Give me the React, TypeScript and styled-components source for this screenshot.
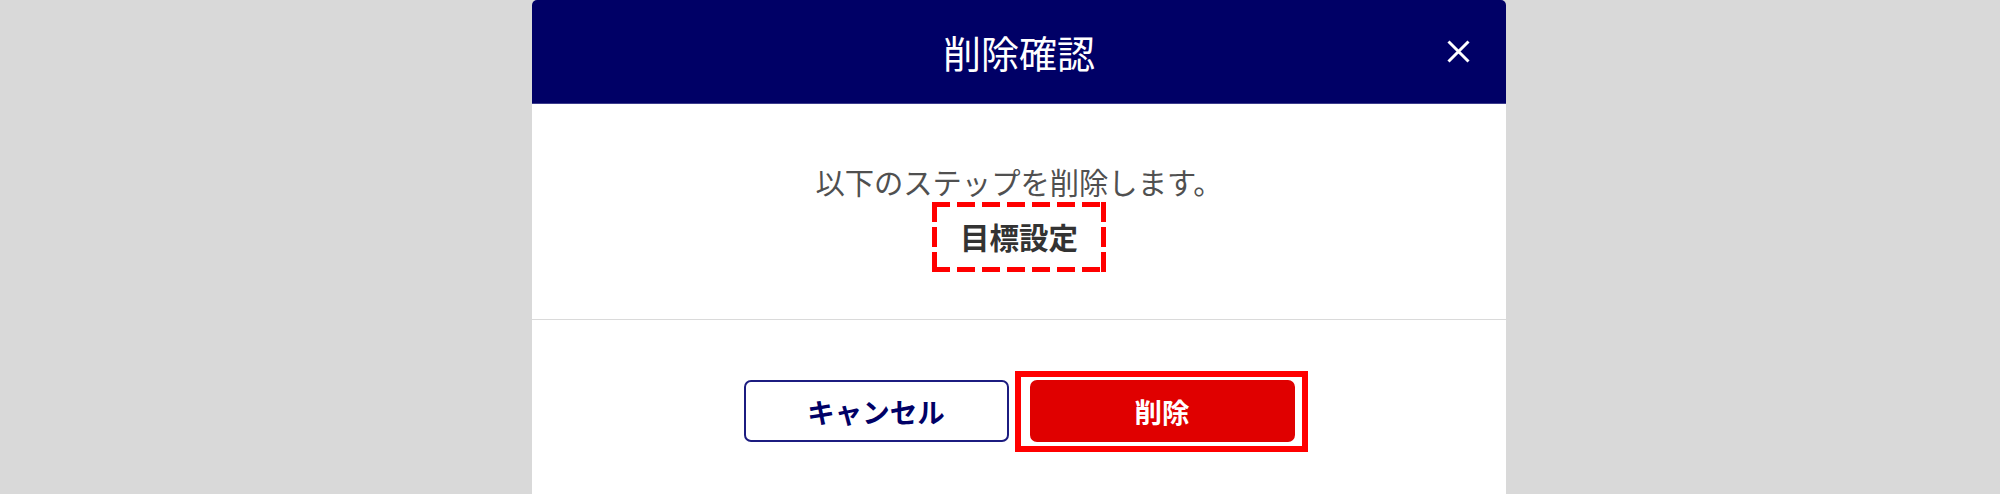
import React from "react";
import styled, { createGlobalStyle } from "styled-components";

const Global = createGlobalStyle`
  html, body {
    margin: 0;
    padding: 0;
    background: #d9d9d9;
    font-family: "Noto Sans CJK JP", "Noto Sans", sans-serif;
  }
`;

const Overlay = styled.div`
  display: flex;
  justify-content: center;
  padding-left: 38px;
  min-height: 494px;
  background: #d9d9d9;
`;

const Dialog = styled.div`
  width: 974px;
  background: #ffffff;
  border-radius: 5px 5px 0 0;
  overflow: hidden;
  align-self: flex-start;
`;

const Header = styled.div`
  display: grid;
  grid-template-columns: 1fr auto 1fr;
  align-items: center;
  height: 103px;
  background: #000066;
  border-bottom: 1px solid #3c3c8c;
`;

const Title = styled.h2`
  grid-column: 2;
  margin: 0;
  color: #ffffff;
  font-size: 38px;
  font-weight: 400;
  line-height: 1;
`;

const CloseButton = styled.button`
  grid-column: 3;
  justify-self: end;
  margin-right: 36px;
  width: 24px;
  height: 24px;
  padding: 0;
  border: none;
  background: transparent;
  display: flex;
  align-items: center;
  justify-content: center;
  cursor: pointer;
`;

const Body = styled.div`
  display: flex;
  flex-direction: column;
  align-items: center;
  padding: 56px 0 47px;
`;

const Message = styled.p`
  margin: 0;
  color: #505050;
  font-size: 29.3px;
  line-height: 42px;
`;

const dashH = "linear-gradient(90deg, #ff0000 18px, transparent 18px)";
const dashV = "linear-gradient(180deg, #ff0000 20px, transparent 20px)";

const Target = styled.div`
  border: 5px solid transparent;
  background-origin: border-box;
  background-image: ${dashH}, ${dashH}, ${dashV}, ${dashV};
  background-position: left top, left bottom, left top, right top;
  background-size: 25px 5px, 25px 5px, 5px 25px, 5px 25px;
  background-repeat: repeat-x, repeat-x, repeat-y, repeat-y;
  padding: 8px 23px 10px;
  color: #333333;
  font-size: 29.5px;
  font-weight: 700;
  line-height: 42px;
`;

const Footer = styled.div`
  display: flex;
  justify-content: center;
  gap: 21px;
  padding: 60px 0 60px;
  border-top: 1px solid #dadada;
`;

const Button = styled.button<{ $primary?: boolean }>`
  width: 265px;
  height: 62px;
  border-radius: 7px;
  font-family: "Noto Sans CJK JP", "Noto Sans", sans-serif;
  font-size: 27.5px;
  font-weight: 700;
  display: flex;
  align-items: center;
  justify-content: center;
  cursor: pointer;
  border: 2px solid ${(p) => (p.$primary ? "#e00000" : "#1c1c80")};
  background: ${(p) => (p.$primary ? "#e00000" : "#ffffff")};
  color: ${(p) => (p.$primary ? "#ffffff" : "#000066")};
`;

const Highlight = styled.div`
  position: relative;
  &::after {
    content: "";
    position: absolute;
    top: -9px;
    bottom: -10px;
    left: -15px;
    right: -13px;
    border: 6px solid #ff0000;
    pointer-events: none;
  }
`;

const CloseIcon = () => (
  <svg width="23" height="23" viewBox="0 0 23 23" fill="none">
    <path d="M1.5 1.5 L21.5 21.5 M21.5 1.5 L1.5 21.5" stroke="#ffffff" strokeWidth="3" strokeLinecap="butt" />
  </svg>
);

export default function App() {
  return (
    <>
      <Global />
      <Overlay>
        <Dialog>
          <Header>
            <Title>削除確認</Title>
            <CloseButton aria-label="閉じる">
              <CloseIcon />
            </CloseButton>
          </Header>
          <Body>
            <Message>以下のステップを削除します。</Message>
            <Target>目標設定</Target>
          </Body>
          <Footer>
            <Button>キャンセル</Button>
            <Highlight>
              <Button $primary>削除</Button>
            </Highlight>
          </Footer>
        </Dialog>
      </Overlay>
    </>
  );
}
